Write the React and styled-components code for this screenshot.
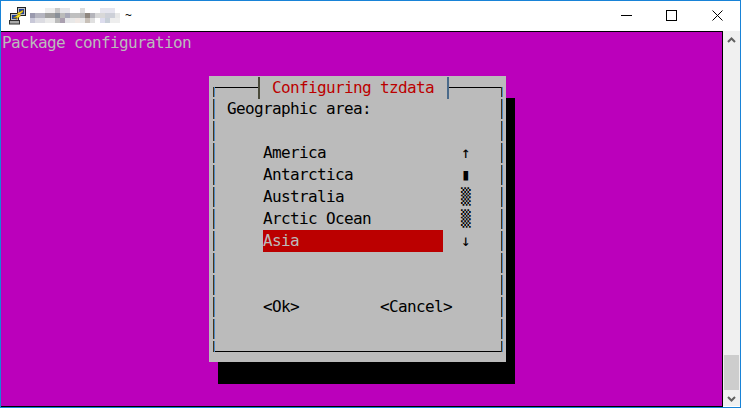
import React from 'react';
import styled, { createGlobalStyle } from 'styled-components';

const MAGENTA = '#bb00bb';
const GREY = '#bbbbbb';
const RED = '#bb0000';
const WINDOW_BLUE = '#1883d7';

const areas = [
  { name: 'America', mark: '↑' },
  { name: 'Antarctica', mark: '▮' },
  { name: 'Australia', mark: '▒' },
  { name: 'Arctic Ocean', mark: '▒' },
  { name: 'Asia', mark: '↓', selected: true },
];

// the host name in the title bar is pixelated in the screenshot
const mosaic = [
  [8, [[18, 10, '#eeeeee'], [28, 5, '#c8c8c8'], [33, 10, '#e5e5ea'], [53, 5, '#dddddd'], [73, 15, '#e5e5ee']]],
  [13, [[3, 5, '#9a9aae'], [8, 10, '#b5b5c0'], [18, 10, '#a0a0a0'], [28, 5, '#8a9098'], [33, 5, '#bbbbbb'], [38, 5, '#a8a8b8'], [43, 10, '#c0c0c0'], [53, 5, '#b8b8b8'], [58, 5, '#908880'], [63, 5, '#b5b5bb'], [68, 10, '#d8d8d8'], [78, 10, '#cdd0d8'], [88, 5, '#e8e8e8']]],
  [18, [[3, 5, '#c8c8d8'], [8, 10, '#dcdce2'], [18, 10, '#eaeaea'], [28, 5, '#bbbbbb'], [33, 5, '#aaa0b0'], [38, 5, '#e5e5e8'], [43, 5, '#e8e8e8'], [48, 5, '#f0e8e4'], [53, 5, '#e8e8e8'], [58, 5, '#c8c0b8'], [63, 5, '#e0e0e0'], [73, 5, '#ddddee'], [78, 5, '#c8d0d8'], [83, 10, '#eeeeee']]],
];

const GlobalStyle = createGlobalStyle`
  html, body {
    margin: 0;
    padding: 0;
    height: 100%;
    overflow: hidden;
    background: #fff;
  }
`;

const Window = styled.div`
  width: 741px;
  height: 408px;
  box-sizing: border-box;
  display: flex;
  flex-direction: column;
  border: 1px solid ${WINDOW_BLUE};
  background: #fff;
`;

const TitleBar = styled.header`
  height: 30px;
  box-sizing: border-box;
  display: flex;
  align-items: center;
  padding: 0 0 1px 8px;
`;

const AppIcon = styled.svg`
  width: 17px;
  height: 18px;
  flex: none;
`;

const HostName = styled.svg`
  width: 92px;
  height: 20px;
  margin: 1px 0 0 4px;
  flex: none;
`;

const TitleText = styled.span`
  font-family: 'Noto Sans', sans-serif;
  font-size: 12px;
  color: #000;
  margin-left: 3px;
`;

const Controls = styled.div`
  margin-left: auto;
  display: flex;
`;

const ControlButton = styled.div`
  width: ${(p) => p.$width || 46}px;
  height: 29px;
  display: flex;
  align-items: center;
  justify-content: center;
`;

const ControlIcon = styled.svg`
  width: 11px;
  height: 11px;
`;

const Body = styled.div`
  flex: 1;
  min-height: 0;
  display: flex;
`;

const Terminal = styled.main`
  flex: 1;
  box-sizing: border-box;
  border-top: 1px solid #000;
  border-right: 1px solid #000;
  border-bottom: 1px solid #000;
  background: ${MAGENTA};
  padding-left: 1px;
  color: ${GREY};
  font-family: 'DejaVu Sans Mono', monospace;
  font-size: 16px;
  letter-spacing: -0.63px;
  line-height: 22px;
  white-space: pre;
`;

const Heading = styled.div`
  height: 22px;
`;

const Dialog = styled.section`
  width: 297px;
  height: 286px;
  box-sizing: border-box;
  margin: 22px 0 0 207px;
  padding: 11px 3px 10px 4px;
  background: ${GREY};
  box-shadow: 9px 22px 0 #000;
  color: #000;
`;

const Frame = styled.div`
  position: relative;
  height: 100%;
  box-sizing: border-box;
  border-top: 1px solid #000;
  border-bottom: 1px solid #000;
  padding: 10px 0 0 14px;

  &:before,
  &:after {
    content: '';
    position: absolute;
    top: -1px;
    bottom: -1px;
    width: 2px;
    background: linear-gradient(to right, #4a3418 50%, #4a8ac8 50%);
    mask: linear-gradient(#000 0 20px, transparent 20px) 0 -10px / 100% 22px repeat-y;
  }

  &:before {
    left: 0;
  }

  &:after {
    right: 0;
  }
`;

const FrameTitle = styled.h1`
  position: absolute;
  top: -11px;
  left: 45px;
  width: 191px;
  height: 22px;
  margin: 0;
  background: ${GREY};
  border-left: 2px solid #4a4a3a;
  border-right: 2px solid #4a6a8a;
  box-sizing: border-box;
  padding-left: 12px;
  color: ${RED};
  font: inherit;
`;

const Prompt = styled.div`
  height: 22px;
`;

const AreaList = styled.ul`
  list-style: none;
  margin: 22px 0 0 36px;
  padding: 0;
`;

const AreaRow = styled.li`
  display: flex;
  height: 22px;
`;

const AreaName = styled.span`
  width: 180px;
  background: ${(p) => (p.$selected ? RED : 'transparent')};
  color: ${(p) => (p.$selected ? GREY : '#000')};
`;

const ScrollMark = styled.span`
  margin-left: 18px;
  width: 9px;
  text-align: center;
`;

const Buttons = styled.div`
  display: flex;
  gap: 81px;
  margin: 44px 0 0 36px;
`;

const ScrollBar = styled.aside`
  width: 17px;
  flex: none;
  display: flex;
  flex-direction: column;
  align-items: center;
  background: #f0f0f0;
  margin-bottom: 1px;
`;

const ScrollArrow = styled.svg`
  width: 9px;
  height: 6px;
  flex: none;
  margin: ${(p) => p.$margin};
`;

const ScrollThumb = styled.div`
  width: 15px;
  height: 35px;
  background: #cdcdcd;
  margin-top: auto;
`;

const Putty = () => (
  <AppIcon viewBox="0 0 17 18">
    <rect x="8.5" y="0.5" width="8" height="8" fill="#c0c0c0" stroke="#202020" />
    <rect x="10" y="2" width="5" height="5" fill="#2040a0" />
    <rect x="1.5" y="6.5" width="8" height="7" fill="#c0c0c0" stroke="#202020" />
    <rect x="3" y="8" width="5" height="4" fill="#2040a0" />
    <rect x="0.5" y="13.5" width="10" height="3.5" fill="#a8a8a8" stroke="#303030" />
    <path d="M14 3 L8 6.5 L9.5 7.5 L4 11 L8 10.5 L7 12.5 L12 8.5 L10.5 7.5 L14 5 Z" fill="#f8e020" stroke="#806000" strokeWidth="0.5" />
  </AppIcon>
);

const Mosaic = () => (
  <HostName viewBox="3 6 92 20" shapeRendering="crispEdges">
    {mosaic.map(([y, cells]) =>
      cells.map(([x, w, fill]) => <rect key={`${y}-${x}`} x={x} y={y} width={w} height={5} fill={fill} />),
    )}
  </HostName>
);

export default function App() {
  return (
    <>
      <GlobalStyle />
      <Window>
        <TitleBar>
          <Putty />
          <Mosaic />
          <TitleText>~</TitleText>
          <Controls>
            <ControlButton $width={44}>
              <ControlIcon viewBox="0 0 11 11">
                <path d="M0 5.5H11" stroke="#000" />
              </ControlIcon>
            </ControlButton>
            <ControlButton>
              <ControlIcon viewBox="0 0 11 11">
                <rect x="0.5" y="0.5" width="10" height="10" fill="none" stroke="#000" />
              </ControlIcon>
            </ControlButton>
            <ControlButton>
              <ControlIcon viewBox="0 0 11 11">
                <path d="M0.5 0.5L10.5 10.5M10.5 0.5L0.5 10.5" stroke="#000" />
              </ControlIcon>
            </ControlButton>
          </Controls>
        </TitleBar>
        <Body>
          <Terminal>
            <Heading>Package configuration</Heading>
            <Dialog>
              <Frame>
                <FrameTitle>Configuring tzdata</FrameTitle>
                <Prompt>Geographic area:</Prompt>
                <AreaList>
                  {areas.map((area) => (
                    <AreaRow key={area.name}>
                      <AreaName $selected={area.selected}>{area.name}</AreaName>
                      <ScrollMark>{area.mark}</ScrollMark>
                    </AreaRow>
                  ))}
                </AreaList>
                <Buttons>
                  <span>&lt;Ok&gt;</span>
                  <span>&lt;Cancel&gt;</span>
                </Buttons>
              </Frame>
            </Dialog>
          </Terminal>
          <ScrollBar>
            <ScrollArrow viewBox="0 0 9 6" $margin="6px 0 0">
              <path d="M1 5L4.5 1.5L8 5" fill="none" stroke="#606060" strokeWidth="2" />
            </ScrollArrow>
            <ScrollThumb />
            <ScrollArrow viewBox="0 0 9 6" $margin="6px 0 4px">
              <path d="M1 1L4.5 4.5L8 1" fill="none" stroke="#606060" strokeWidth="2" />
            </ScrollArrow>
          </ScrollBar>
        </Body>
      </Window>
    </>
  );
}
